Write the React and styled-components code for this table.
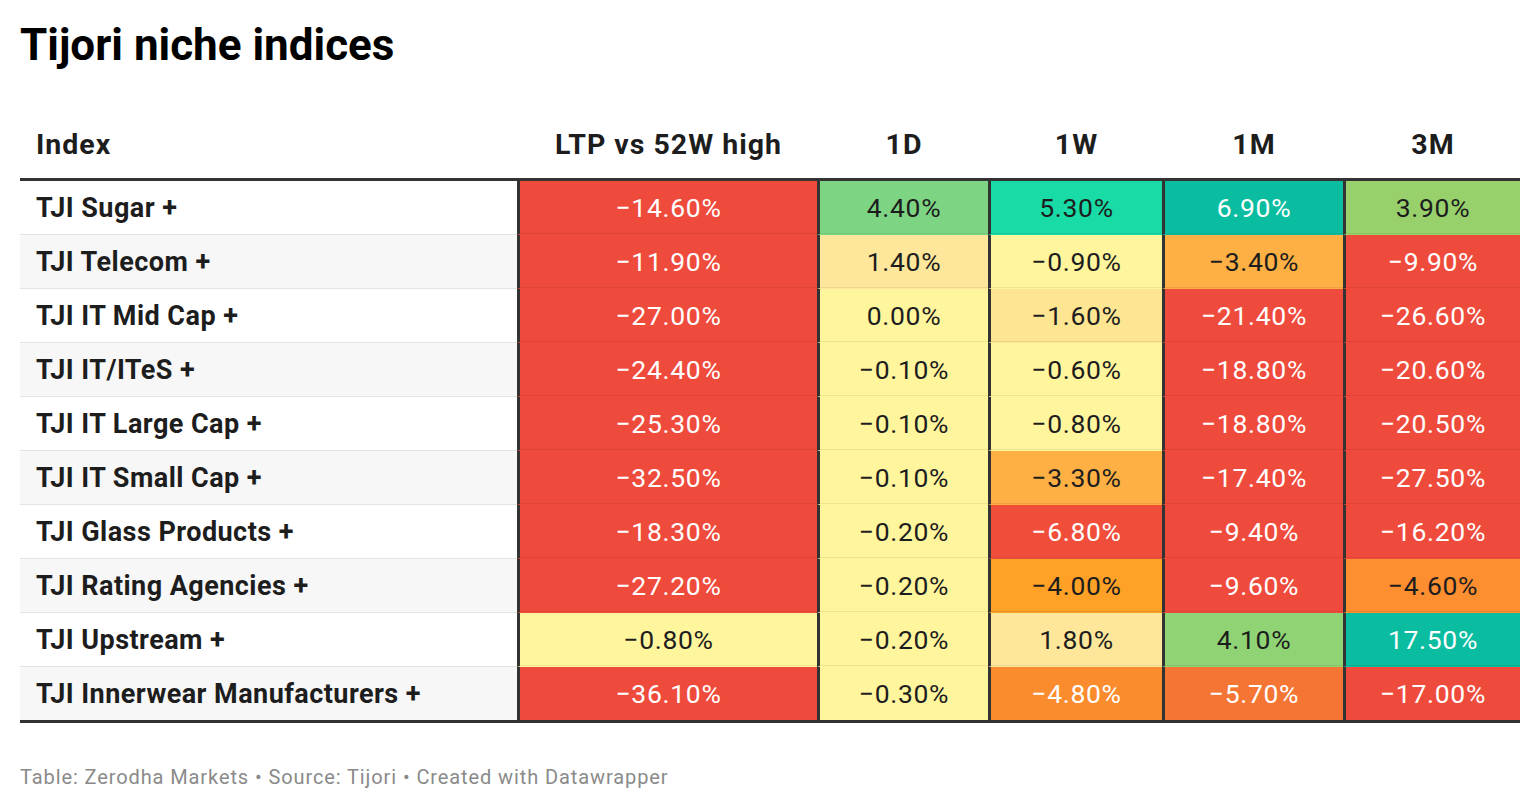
import React from "react";
import styled, { createGlobalStyle } from "styled-components";

const Global = createGlobalStyle`
  html, body { margin: 0; padding: 0; background: #fff; }
  body { font-family: Roboto, "Liberation Sans", Arial, sans-serif; color: #1d1d1d; }
`;

const Page = styled.div`
  width: 1500px;
  padding: 18px 20px 0 20px;
`;

const Title = styled.h1`
  margin: 0;
  font-size: 44px;
  line-height: 54px;
  font-weight: 700;
  color: #000;
`;

const Table = styled.div`
  margin-top: 38px;
  display: grid;
  grid-template-columns: 497px 300px 171px 174px 181px 177px;
  border-bottom: 3px solid #333;
`;

const HeadCell = styled.div`
  height: 68px;
  display: flex;
  align-items: center;
  justify-content: ${(p) => (p.$left ? "flex-start" : "center")};
  padding-left: ${(p) => (p.$left ? "16px" : "3px")};
  font-size: 28.5px;
  letter-spacing: 1px;
  font-weight: 700;
  color: #1d1d1d;
  border-bottom: 3px solid #333;
`;

const NameCell = styled.div`
  height: 53px;
  display: flex;
  align-items: center;
  padding-left: 16px;
  font-size: 27px;
  letter-spacing: 0.45px;
  font-weight: 700;
  color: #1d1d1d;
  background: ${(p) => (p.$alt ? "#f7f7f7" : "#fff")};
  border-bottom: ${(p) => (p.$last ? "none" : "1px solid #e4e4e4")};
`;

const ValueCell = styled.div`
  height: 53px;
  display: flex;
  align-items: center;
  justify-content: center;
  border-left: 3px solid #333;
  font-size: 26.5px;
  letter-spacing: 0.7px;
  font-weight: 400;
  background: ${(p) => p.$bg};
  color: ${(p) => (p.$light ? "#fff" : "#1d1d1d")};
  box-shadow: ${(p) => (p.$last ? "none" : "inset 0 -1px 0 rgba(0,0,0,0.07)")};
  border-bottom: ${(p) => (p.$last ? "none" : "1px solid transparent")};
`;

const Footer = styled.div`
  margin-top: 42px;
  font-size: 20px;
  letter-spacing: 0.9px;
  color: #8a8a8a;
`;

const C = {
  red: ["#ef4b3d", true],
  pale: ["#fff59d", false],
  sand: ["#fee79a", false],
  sand2: ["#fee592", false],
  amber: ["#feb044", false],
  orange: ["#ffa127", false],
  orange2: ["#fd8f30", false],
  orangeW: ["#fa8c2e", true],
  deep: ["#f57634", true],
  red2: ["#f04e3b", true],
  green: ["#7dd584", false],
  lime: ["#98d16c", false],
  lime2: ["#90d374", false],
  mint: ["#18dba6", false],
  teal: ["#0abda0", true],
};

const rows = [
  ["TJI Sugar +", [["−14.60%", "red"], ["4.40%", "green"], ["5.30%", "mint"], ["6.90%", "teal"], ["3.90%", "lime"]]],
  ["TJI Telecom +", [["−11.90%", "red"], ["1.40%", "sand"], ["−0.90%", "pale"], ["−3.40%", "amber"], ["−9.90%", "red"]]],
  ["TJI IT Mid Cap +", [["−27.00%", "red"], ["0.00%", "pale"], ["−1.60%", "sand2"], ["−21.40%", "red"], ["−26.60%", "red"]]],
  ["TJI IT/ITeS +", [["−24.40%", "red"], ["−0.10%", "pale"], ["−0.60%", "pale"], ["−18.80%", "red"], ["−20.60%", "red"]]],
  ["TJI IT Large Cap +", [["−25.30%", "red"], ["−0.10%", "pale"], ["−0.80%", "pale"], ["−18.80%", "red"], ["−20.50%", "red"]]],
  ["TJI IT Small Cap +", [["−32.50%", "red"], ["−0.10%", "pale"], ["−3.30%", "amber"], ["−17.40%", "red"], ["−27.50%", "red"]]],
  ["TJI Glass Products +", [["−18.30%", "red"], ["−0.20%", "pale"], ["−6.80%", "red2"], ["−9.40%", "red"], ["−16.20%", "red"]]],
  ["TJI Rating Agencies +", [["−27.20%", "red"], ["−0.20%", "pale"], ["−4.00%", "orange"], ["−9.60%", "red"], ["−4.60%", "orange2"]]],
  ["TJI Upstream +", [["−0.80%", "pale"], ["−0.20%", "pale"], ["1.80%", "sand"], ["4.10%", "lime2"], ["17.50%", "teal"]]],
  ["TJI Innerwear Manufacturers +", [["−36.10%", "red"], ["−0.30%", "pale"], ["−4.80%", "orangeW"], ["−5.70%", "deep"], ["−17.00%", "red"]]],
];

const heads = ["LTP vs 52W high", "1D", "1W", "1M", "3M"];

export default function App() {
  return (
    <Page>
      <Global />
      <Title>Tijori niche indices</Title>
      <Table>
        <HeadCell $left>Index</HeadCell>
        {heads.map((h) => (
          <HeadCell key={h}>{h}</HeadCell>
        ))}
        {rows.map(([name, vals], i) => {
          const last = i === rows.length - 1;
          return (
            <React.Fragment key={name}>
              <NameCell $alt={i % 2 === 1} $last={last}>{name}</NameCell>
              {vals.map(([v, k], j) => (
                <ValueCell key={j} $bg={C[k][0]} $light={C[k][1]} $last={last}>
                  {v}
                </ValueCell>
              ))}
            </React.Fragment>
          );
        })}
      </Table>
      <Footer>Table: Zerodha Markets • Source: Tijori • Created with Datawrapper</Footer>
    </Page>
  );
}
